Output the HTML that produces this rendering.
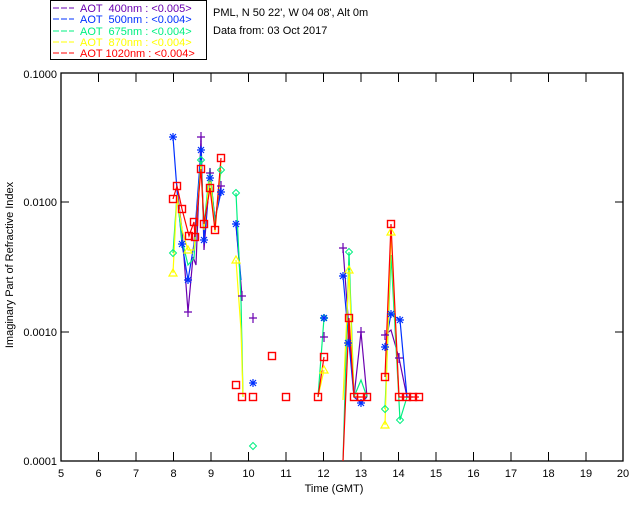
<!DOCTYPE html>
<html><head><meta charset="utf-8"><style>
html,body{margin:0;padding:0;background:#fff;width:640px;height:512px;overflow:hidden}
svg{display:block}
text{font-family:"Liberation Sans",sans-serif;font-size:11px}
</style></head><body>
<svg width="640" height="512" viewBox="0 0 640 512" xmlns="http://www.w3.org/2000/svg">
<defs>
<g id="sq"><rect x="-3.5" y="-3.5" width="7" height="7" fill="none" stroke="#f00" stroke-width="1.4"/></g>
<g id="st" stroke="#0030ff" stroke-width="1.2"><path d="M-4 0H4M0 -4V4M-3 -3L3 3M-3 3L3 -3"/></g>
<g id="cr" stroke="#6a00b0" stroke-width="1.2"><path d="M-4 0H4M0 -5V5"/></g>
<g id="dm"><path d="M0 -3.5L3.5 0L0 3.5L-3.5 0Z" fill="none" stroke="#00f080" stroke-width="1"/></g>
<g id="tr"><path d="M0 -4L4 3H-4Z" fill="none" stroke="#ffff00" stroke-width="1.2"/></g>
</defs>
<!-- legend -->
<rect x="50.5" y="0.5" width="156" height="59" fill="#fff" stroke="#000"/>
<g stroke-width="1">
<line x1="53" y1="8" x2="74" y2="8" stroke="#6a00b0" stroke-dasharray="6,2"/>
<line x1="53" y1="19" x2="74" y2="19" stroke="#0030ff" stroke-dasharray="6,2"/>
<line x1="53" y1="31" x2="74" y2="31" stroke="#00f080" stroke-dasharray="6,2"/>
<line x1="53" y1="42" x2="74" y2="42" stroke="#ffff00" stroke-dasharray="6,2"/>
<line x1="53" y1="53" x2="74" y2="53" stroke="#f00" stroke-dasharray="6,2"/>
</g>
<text x="80" y="12" fill="#6a00b0" xml:space="preserve">AOT  400nm : &lt;0.005&gt;</text>
<text x="80" y="23" fill="#0030ff" xml:space="preserve">AOT  500nm : &lt;0.004&gt;</text>
<text x="80" y="35" fill="#00f080" xml:space="preserve">AOT  675nm : &lt;0.004&gt;</text>
<text x="80" y="46" fill="#ffff00" xml:space="preserve">AOT  870nm : &lt;0.004&gt;</text>
<text x="80" y="57" fill="#f00" xml:space="preserve">AOT 1020nm : &lt;0.004&gt;</text>
<text x="213" y="16" fill="#000">PML, N 50 22', W 04 08', Alt 0m</text>
<text x="213" y="34" fill="#000">Data from: 03 Oct 2017</text>
<!-- axes -->
<rect x="61" y="73" width="562" height="388" fill="none" stroke="#000" stroke-width="1.3"/>
<g stroke="#000" stroke-width="1">
<path d="M98.5 73v9M136 73v9M173.5 73v9M211 73v9M248.5 73v9M286 73v9M323.5 73v9M361 73v9M398.5 73v9M436 73v9M473.5 73v9M511 73v9M548.5 73v9M586 73v9"/>
<path d="M98.5 461v-9M136 461v-9M173.5 461v-9M211 461v-9M248.5 461v-9M286 461v-9M323.5 461v-9M361 461v-9M398.5 461v-9M436 461v-9M473.5 461v-9M511 461v-9M548.5 461v-9M586 461v-9"/>
<path d="M61 202h8M61 332h8M623 202h-8M623 332h-8"/>
</g>
<g fill="#000" text-anchor="end">
<text x="57" y="78">0.1000</text><text x="57" y="206">0.0100</text><text x="57" y="336">0.0010</text><text x="57" y="465">0.0001</text>
</g>
<g fill="#000" text-anchor="middle">
<text x="61" y="477">5</text><text x="98.5" y="477">6</text><text x="136" y="477">7</text><text x="173.5" y="477">8</text><text x="211" y="477">9</text><text x="248.5" y="477">10</text><text x="286" y="477">11</text><text x="323.5" y="477">12</text><text x="361" y="477">13</text><text x="398.5" y="477">14</text><text x="436" y="477">15</text><text x="473.5" y="477">16</text><text x="511" y="477">17</text><text x="548.5" y="477">18</text><text x="586" y="477">19</text><text x="623" y="477">20</text>
<text x="334" y="492">Time (GMT)</text>
<text transform="translate(13,265) rotate(-90)">Imaginary Part of Refractive Index</text>
</g>
<!-- data lines -->
<g fill="none" stroke-width="1.2">
<polyline stroke="#6a00b0" points="177,188 182,230 188,312 193,257 196,265 201,137 204,250 210,173 215,220 221,186"/>
<polyline stroke="#6a00b0" points="236,225 242,296"/>
<polyline stroke="#6a00b0" points="343,248 349,330 354,397 361,332 367,397"/>
<polyline stroke="#6a00b0" points="385,335 391,330 399,358 407,397"/>
<polyline stroke="#0030ff" points="173,137 177,190 182,244 188,280 194,244 201,150 204,240 210,178 215,220 221,192"/>
<polyline stroke="#0030ff" points="236,224 241,280"/>
<polyline stroke="#0030ff" points="343,276 349,343 354,397 361,403 367,397"/>
<polyline stroke="#0030ff" points="385,347 391,314 400,320 407,397 413,397"/>
<polyline stroke="#00f080" points="173,253 177,195 182,240 188,265 194,258 201,160 204,225 210,168 215,225 221,170"/>
<polyline stroke="#00f080" points="236,193 241,300 243,397"/>
<polyline stroke="#00f080" points="324,318 318,397"/>
<polyline stroke="#00f080" points="343,461 349,252 354,397 361,380 367,397"/>
<polyline stroke="#00f080" points="385,409 391,255 400,420 407,397"/>
<polyline stroke="#ffff00" points="173,273 177,195 182,230 188,250 194,250 201,165 204,230 210,175 215,232 221,162"/>
<polyline stroke="#ffff00" points="236,260 241,330 243,397"/>
<polyline stroke="#ffff00" points="318,397 324,370"/>
<polyline stroke="#ffff00" points="343,400 349,270 354,397 361,397"/>
<polyline stroke="#ffff00" points="385,425 391,232 399,397"/>
<polyline stroke="#f00" points="173,199 177,186 182,209 189,236 194,222 195,237 201,169 204,224 210,188 215,230 221,158"/>
<polyline stroke="#f00" points="318,397 324,357"/>
<polyline stroke="#f00" points="343,461 349,318 354,397 361,397 367,397"/>
<polyline stroke="#f00" points="385,377 391,224 399,397 407,397 413,397 419,397"/>
</g>
<!-- markers -->
<g>
<use href="#dm" x="173" y="253"/><use href="#dm" x="236" y="193"/><use href="#dm" x="253" y="446"/><use href="#dm" x="201" y="160"/><use href="#dm" x="221" y="170"/><use href="#dm" x="349" y="252"/><use href="#dm" x="385" y="409"/><use href="#dm" x="400" y="420"/><use href="#dm" x="324" y="318"/>
<use href="#tr" x="173" y="273"/><use href="#tr" x="236" y="260"/><use href="#tr" x="349" y="270"/><use href="#tr" x="385" y="425"/><use href="#tr" x="391" y="232"/><use href="#tr" x="324" y="370"/><use href="#tr" x="188" y="250"/>
<use href="#cr" x="201" y="137"/><use href="#cr" x="188" y="312"/><use href="#cr" x="210" y="173"/><use href="#cr" x="221" y="186"/><use href="#cr" x="242" y="296"/><use href="#cr" x="253" y="318"/><use href="#cr" x="343" y="248"/><use href="#cr" x="361" y="332"/><use href="#cr" x="385" y="335"/><use href="#cr" x="399" y="358"/><use href="#cr" x="324" y="337"/>
<use href="#st" x="173" y="137"/><use href="#st" x="182" y="244"/><use href="#st" x="188" y="280"/><use href="#st" x="201" y="150"/><use href="#st" x="204" y="240"/><use href="#st" x="210" y="178"/><use href="#st" x="221" y="192"/><use href="#st" x="236" y="224"/><use href="#st" x="253" y="383"/><use href="#st" x="324" y="318"/><use href="#st" x="343" y="276"/><use href="#st" x="348" y="343"/><use href="#st" x="361" y="403"/><use href="#st" x="385" y="347"/><use href="#st" x="391" y="314"/><use href="#st" x="400" y="320"/>
<use href="#sq" x="173" y="199"/><use href="#sq" x="177" y="186"/><use href="#sq" x="182" y="209"/><use href="#sq" x="189" y="236"/><use href="#sq" x="194" y="222"/><use href="#sq" x="195" y="237"/><use href="#sq" x="201" y="169"/><use href="#sq" x="204" y="224"/><use href="#sq" x="210" y="188"/><use href="#sq" x="215" y="230"/><use href="#sq" x="221" y="158"/>
<use href="#sq" x="236" y="385"/><use href="#sq" x="242" y="397"/><use href="#sq" x="253" y="397"/><use href="#sq" x="272" y="356"/><use href="#sq" x="286" y="397"/>
<use href="#sq" x="318" y="397"/><use href="#sq" x="324" y="357"/><use href="#sq" x="349" y="318"/><use href="#sq" x="354" y="397"/><use href="#sq" x="361" y="397"/><use href="#sq" x="367" y="397"/>
<use href="#sq" x="385" y="377"/><use href="#sq" x="391" y="224"/><use href="#sq" x="399" y="397"/><use href="#sq" x="407" y="397"/><use href="#sq" x="413" y="397"/><use href="#sq" x="419" y="397"/>
</g>
</svg>
</body></html>
